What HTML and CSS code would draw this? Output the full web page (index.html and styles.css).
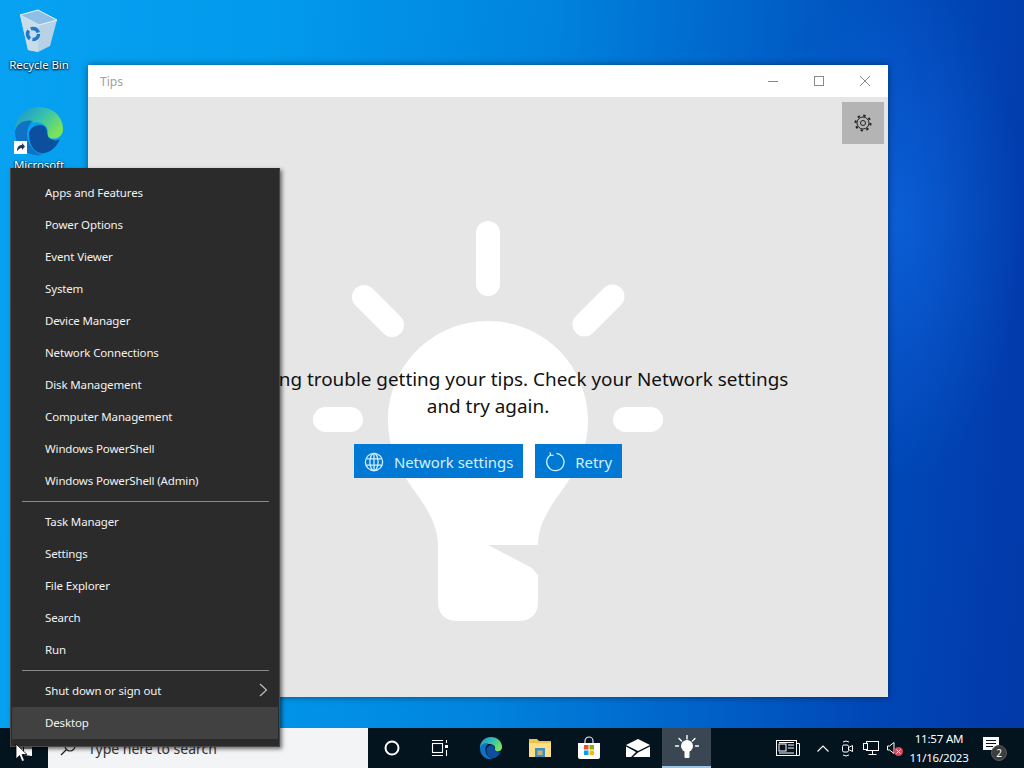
FILE: index.html
```html
<!DOCTYPE html>
<html lang="en">
<head>
    <meta charset="UTF-8">
    <title>Tips</title>
    <link rel="stylesheet" href="styles.css">
</head>
<body>
    <div class="screen">
        <div class="desktop">
            <div class="desk-icon recycle">
                <svg width="40" height="44" viewBox="0 0 40 44">
                    <path d="M1 6 L19 1 L38 11 L31 37 L19 43 L9 41 Z" fill="#b7d2e6"/>
                    <path d="M1 6 L19 1 L38 11 L20 16 Z" fill="#8fbfe6" stroke="#e6f2fa" stroke-width="1"/>
                    <path d="M1 6 L20 16 L19 43 L9 41 Z" fill="#c9dcea"/>
                    <circle cx="14" cy="25" r="5.5" fill="none" stroke="#1f78c8" stroke-width="3.5" stroke-dasharray="9 2.5"/>
                </svg>
                <span>Recycle Bin</span>
            </div>
            <div class="desk-icon edge-icon">
                <svg width="52" height="52" viewBox="0 0 52 52">
                    <defs>
                        <linearGradient id="edgeTop" x1="0" y1="0" x2="1" y2="0.6">
                            <stop offset="0" stop-color="#1b8fcf"/>
                            <stop offset="0.55" stop-color="#35c1b0"/>
                            <stop offset="1" stop-color="#7be25a"/>
                        </linearGradient>
                    </defs>
                    <path d="M2 26 C2 11 13 2 26 2 C40 2 50 12 50 24 C50 32 43 35 37 33 C33 31 36 27 34 23 C31 17 21 15 14 20 C8 24 4 30 2 26 Z" fill="url(#edgeTop)"/>
                    <path d="M2 26 C4 18 12 14 20 16 C12 22 12 36 20 44 C24 48 28 50 30 50 C14 52 2 42 2 26 Z" fill="#0f72c4"/>
                    <path d="M16 30 C16 22 25 18 31 21 C35 24 33 29 36 33 C40 36 45 36 47 34 C43 44 33 50 27 48 C20 46 16 38 16 30 Z" fill="#0b4f9e"/>
                    <rect x="1" y="36" width="13" height="13" fill="#fff"/>
                    <path d="M4 46 C4 42 6 40 9 40 L9 38 L12 41.5 L9 45 L9 43 C7 43 6 44 4 46 Z" fill="#1f3a57"/>
                </svg>
                <span>Microsoft</span>
            </div>

            <section class="window">
                <header class="titlebar">
                    <span class="title">Tips</span>
                    <div class="win-controls">
                        <button class="win-btn"><svg width="12" height="12" viewBox="0 0 12 12"><path d="M1 6.5 H11" stroke="#8a8a8a"/></svg></button>
                        <button class="win-btn"><svg width="12" height="12" viewBox="0 0 12 12"><rect x="1.5" y="1.5" width="9" height="9" fill="none" stroke="#8a8a8a"/></svg></button>
                        <button class="win-btn"><svg width="12" height="12" viewBox="0 0 12 12"><path d="M1 1 L11 11 M11 1 L1 11" stroke="#8a8a8a"/></svg></button>
                    </div>
                </header>
                <div class="tips-body">
                    <svg class="bulb" width="352" height="402" viewBox="0 0 352 402">
                        <g fill="#fff">
                            <rect x="164" y="1" width="24" height="75" rx="12"/>
                            <rect x="1" y="187" width="50" height="25" rx="12.5"/>
                            <rect x="301" y="187" width="50" height="25" rx="12.5"/>
                            <path d="M176 101 C232 101 276 146 276 201 C276 225 268 240 258 258 C248 276 226 296 226 326 L226 381 Q226 401 206 401 L146 401 Q126 401 126 381 L126 326 C126 296 104 276 94 258 C84 240 76 225 76 201 C76 146 120 101 176 101 Z"/>
                        </g>
                        <g stroke="#fff" stroke-width="24" stroke-linecap="round">
                            <path d="M52 77 L80 105"/>
                            <path d="M272.5 104.5 L300.5 76.5"/>
                        </g>
                        <path d="M176 325 L228 325 L228 358 L220 348 Z" fill="#e6e6e6"/>
                    </svg>
                    <button class="settings-btn">
                        <svg width="18" height="18" viewBox="0 0 18 18" fill="none" stroke="#222" stroke-width="1">
                            <circle cx="9" cy="9" r="2.5"/>
                            <circle cx="9" cy="9" r="6"/>
                            <circle cx="9" cy="9" r="7.5" stroke-width="2" stroke-dasharray="2.4 3.49"/>
                        </svg>
                    </button>
                    <div class="message">
                        <p>We're having trouble getting your tips. Check your Network settings<br>and try again.</p>
                        <div class="actions">
                            <button class="action-btn">
                                <svg width="20" height="20" viewBox="0 0 22 22" fill="none" stroke="#d3f1ff" stroke-width="1.4">
                                    <circle cx="11" cy="11" r="9.5"/>
                                    <ellipse cx="11" cy="11" rx="4.5" ry="9.5"/>
                                    <path d="M11 1.5 V20.5 M2.5 7.5 H19.5 M2.5 14.5 H19.5"/>
                                </svg>
                                Network settings
                            </button>
                            <button class="action-btn">
                                <svg width="20" height="20" viewBox="0 0 22 22" fill="none" stroke="#d3f1ff" stroke-width="1.4">
                                    <path d="M6 3.2 A9.5 9.5 0 1 0 12.5 1.6"/>
                                    <path d="M5.5 0.5 L6.2 3.5 L9.5 3.8"/>
                                </svg>
                                Retry
                            </button>
                        </div>
                    </div>
                </div>
            </section>

            <nav class="winx-menu">
                <div class="menu-group">
                    <div class="menu-item">Apps and Features</div>
                    <div class="menu-item">Power Options</div>
                    <div class="menu-item">Event Viewer</div>
                    <div class="menu-item">System</div>
                    <div class="menu-item">Device Manager</div>
                    <div class="menu-item">Network Connections</div>
                    <div class="menu-item">Disk Management</div>
                    <div class="menu-item">Computer Management</div>
                    <div class="menu-item">Windows PowerShell</div>
                    <div class="menu-item">Windows PowerShell (Admin)</div>
                </div>
                <div class="menu-sep"></div>
                <div class="menu-group">
                    <div class="menu-item">Task Manager</div>
                    <div class="menu-item">Settings</div>
                    <div class="menu-item">File Explorer</div>
                    <div class="menu-item">Search</div>
                    <div class="menu-item">Run</div>
                </div>
                <div class="menu-sep"></div>
                <div class="menu-group">
                    <div class="menu-item has-sub">Shut down or sign out
                        <svg width="10" height="14" viewBox="0 0 10 14"><path d="M2 1 L8.5 7 L2 13" fill="none" stroke="#bdbdbd" stroke-width="1.2"/></svg>
                    </div>
                    <div class="menu-item active">Desktop</div>
                </div>
            </nav>

            <svg class="cursor" width="14" height="20" viewBox="0 0 14 20">
                <path d="M1 1 V16 L4.5 12.5 L7 18.5 L9.5 17.5 L7 11.5 L12 11.5 Z" fill="#fff" stroke="#000" stroke-width="0.8"/>
            </svg>
        </div>

        <footer class="taskbar">
            <div class="start-btn">
                <svg width="16" height="16" viewBox="0 0 16 16" fill="#fff">
                    <path d="M0 2.2 L7 1.2 V7.5 H0 Z M8 1 L16 0 V7.5 H8 Z M0 8.5 H7 V14.8 L0 13.8 Z M8 8.5 H16 V16 L8 15 Z"/>
                </svg>
            </div>
            <div class="search-box">
                <svg width="18" height="18" viewBox="0 0 18 18" fill="none" stroke="#222" stroke-width="1.2"><circle cx="11" cy="7" r="5"/><path d="M7.5 10.5 L2 16"/></svg>
                <span>Type here to search</span>
            </div>
            <div class="task-btn task-wide">
                <svg width="16" height="16" viewBox="0 0 16 16"><circle cx="8" cy="8" r="6.5" fill="none" stroke="#fff" stroke-width="2"/></svg>
            </div>
            <div class="task-btn task-wide">
                <svg width="18" height="18" viewBox="0 0 18 18" fill="none" stroke="#fff" stroke-width="1.1">
                    <path d="M1 1.5 H12 M1 16.5 H12"/>
                    <rect x="1.5" y="4.5" width="10" height="9"/>
                    <rect x="14" y="6" width="3" height="3" fill="#fff" stroke="none"/>
                    <path d="M15.5 1 V4 M15.5 11 V17"/>
                </svg>
            </div>
            <div class="apps">
                <div class="task-btn">
                    <svg width="24" height="24" viewBox="0 0 52 52">
                        <path d="M2 26 C2 11 13 2 26 2 C40 2 50 12 50 24 C50 32 43 35 37 33 C33 31 36 27 34 23 C31 17 21 15 14 20 C8 24 4 30 2 26 Z" fill="url(#edgeTop)"/>
                        <path d="M2 26 C4 18 12 14 20 16 C12 22 12 36 20 44 C24 48 28 50 30 50 C14 52 2 42 2 26 Z" fill="#0f72c4"/>
                        <path d="M16 30 C16 22 25 18 31 21 C35 24 33 29 36 33 C40 36 45 36 47 34 C43 44 33 50 27 48 C20 46 16 38 16 30 Z" fill="#0b4f9e"/>
                    </svg>
                </div>
                <div class="task-btn">
                    <svg width="22" height="20" viewBox="0 0 22 20">
                        <path d="M0 1 H8 L10 3 H22 V19 H0 Z" fill="#f2c04c"/>
                        <path d="M0 5 H22 V19 H0 Z" fill="#ffdf85"/>
                        <path d="M6 10 H16 V19 H6 Z" fill="#3b8fc4"/>
                        <path d="M8.5 12.5 H13.5 V17 H8.5 Z" fill="#c9b273"/>
                    </svg>
                </div>
                <div class="task-btn">
                    <svg width="24" height="24" viewBox="0 0 24 24">
                        <path d="M8 7 V5 A4 4 0 0 1 16 5 V7" fill="none" stroke="#e8e8e8" stroke-width="1.2"/>
                        <path d="M1 7 H23 V21 Q23 23 21 23 H3 Q1 23 1 21 Z" fill="#fff"/>
                        <rect x="7" y="9" width="4.5" height="4.5" fill="#f25022"/>
                        <rect x="12.5" y="9" width="4.5" height="4.5" fill="#7fba00"/>
                        <rect x="7" y="14.5" width="4.5" height="4.5" fill="#00a4ef"/>
                        <rect x="12.5" y="14.5" width="4.5" height="4.5" fill="#ffb900"/>
                    </svg>
                </div>
                <div class="task-btn">
                    <svg width="24" height="18" viewBox="0 0 24 18">
                        <path d="M0 6 L12 0 L24 6 L12 12 Z" fill="#fff"/>
                        <path d="M0 7.5 L10 13 L5 18 H0 Z M24 7.5 V18 H7 L12 13.5 Z" fill="#fff"/>
                    </svg>
                </div>
                <div class="task-btn active">
                    <svg width="24" height="24" viewBox="0 0 24 24" fill="#fff">
                        <circle cx="12" cy="11" r="6"/>
                        <rect x="9.5" y="15" width="5" height="8" rx="1"/>
                        <path d="M12 0.5 V4 M4 3.5 L6.5 6 M20 3.5 L17.5 6 M0.5 11 H3.5 M20.5 11 H23.5" stroke="#fff" stroke-width="1.4" stroke-linecap="round"/>
                    </svg>
                </div>
            </div>
            <div class="tray">
                <svg class="tray-news" width="24" height="16" viewBox="0 0 24 16" fill="none" stroke="#fff" stroke-width="1">
                    <rect x="0.5" y="0.5" width="20" height="15"/>
                    <path d="M20.5 3.5 H23.5 V15.5 H20.5"/>
                    <rect x="3" y="4" width="7" height="7"/>
                    <path d="M3 2.5 H18 M12 5 H18 M12 8 H18 M3 13 H18"/>
                </svg>
                <svg class="tray-chevron" width="12" height="7" viewBox="0 0 12 7" fill="none" stroke="#fff" stroke-width="1.1"><path d="M0.5 6.5 L6 1 L11.5 6.5"/></svg>
                <svg class="tray-meet" width="11" height="17" viewBox="0 0 11 17" fill="none" stroke="#fff" stroke-width="1">
                    <rect x="0.5" y="5" width="6" height="7" rx="1.5"/>
                    <path d="M6.5 7.5 L10.5 5.5 V11.5 L6.5 9.5 M1 2 Q4 0 7 2 M1 15 Q4 17 7 15"/>
                </svg>
                <svg class="tray-network" width="16" height="14" viewBox="0 0 16 14" fill="none" stroke="#fff" stroke-width="1">
                    <rect x="3.5" y="0.5" width="12" height="9"/>
                    <path d="M9.5 9.5 V13.5 M5.5 13.5 H13.5"/>
                    <rect x="0.5" y="2.5" width="4" height="6" fill="#04141f"/>
                </svg>
                <div class="tray-volume">
                    <svg width="8" height="12" viewBox="0 0 8 12"><path d="M0.5 4 H2.5 L7 0.5 V11.5 L2.5 8 H0.5 Z" fill="none" stroke="#fff"/></svg>
                    <span class="mute-badge">
                        <svg width="5" height="5" viewBox="0 0 5 5"><path d="M0.5 0.5 L4.5 4.5 M4.5 0.5 L0.5 4.5" stroke="#fff"/></svg>
                    </span>
                </div>
                <div class="clock">
                    <span>11:57 AM</span>
                    <span>11/16/2023</span>
                </div>
                <div class="notify">
                    <svg width="16" height="13" viewBox="0 0 16 13"><path d="M0 0 H16 V13 H0 Z" fill="#fff"/><path d="M3 3.5 H13 M3 6.5 H13 M3 9.5 H10" stroke="#04141f"/></svg>
                    <span class="notify-count">2</span>
                </div>
            </div>
        </footer>
    </div>
</body>
</html>
```

FILE: styles.css
```css
* {
    box-sizing: border-box;
}

body {
    margin: 0;
    font-family: "Noto Sans", "Open Sans", sans-serif;
    overflow: hidden;
}

button {
    font-family: inherit;
    border: none;
    background: none;
    padding: 0;
}

.screen {
    width: 1024px;
    height: 768px;
    display: flex;
    flex-direction: column;
    overflow: hidden;
}

.desktop {
    position: relative;
    flex: 1;
    background:
        radial-gradient(ellipse 120px 260px at 900px 220px, rgba(20, 110, 235, 0.55), transparent),
        linear-gradient(95deg, #08a2f2 0%, #029aec 25%, #0084de 50%, #0062ca 70%, #0048b8 85%, #0338a8 100%);
}

.desk-icon {
    position: absolute;
    width: 76px;
    display: flex;
    flex-direction: column;
    align-items: center;
    color: #fff;
    font-size: 11.5px;
    letter-spacing: -0.1px;
    line-height: 16px;
    text-shadow: 0 1px 2px #000, 0 0 2px #000;
}

.recycle {
    left: 1px;
    top: 9px;
    gap: 4px;
}

.edge-icon {
    left: 1px;
    top: 105px;
}

/* tips window */
.window {
    position: absolute;
    left: 88px;
    top: 65px;
    width: 800px;
    height: 632px;
    background-color: #e6e6e6;
    box-shadow: 0 0 7px rgba(0, 0, 0, 0.45);
    display: flex;
    flex-direction: column;
}

.titlebar {
    height: 32px;
    background-color: #fff;
    display: flex;
    align-items: center;
    justify-content: space-between;
}

.title {
    padding-left: 12px;
    font-size: 12px;
    color: #a0a0a0;
}

.win-controls {
    display: flex;
    height: 32px;
}

.win-btn {
    width: 46px;
    display: flex;
    align-items: center;
    justify-content: center;
}

.tips-body {
    position: relative;
    flex: 1;
}

.bulb {
    position: absolute;
    left: 224px;
    top: 123px;
}

.settings-btn {
    position: absolute;
    right: 4px;
    top: 5px;
    width: 42px;
    height: 42px;
    background-color: #b4b4b4;
    display: flex;
    align-items: center;
    justify-content: center;
}

.message {
    position: relative;
    padding-top: 269px;
    text-align: center;
}

.message p {
    margin: 0;
    font-size: 18.9px;
    line-height: 27px;
    color: #111;
}

.actions {
    display: flex;
    justify-content: center;
    gap: 12px;
    margin-top: 24px;
}

.action-btn {
    height: 34px;
    padding: 1px 10px 0;
    display: flex;
    align-items: center;
    gap: 10px;
    background-color: #0078d4;
    color: #d3f1ff;
    font-size: 14.9px;
}

/* win+x menu */
.winx-menu {
    position: absolute;
    left: 10px;
    top: 168px;
    width: 270px;
    height: 579px;
    padding: 8px 1px;
    background-color: #2b2b2b;
    box-shadow: 2px 2px 4px rgba(0, 0, 0, 0.55);
    border: 1px solid #4a4a4a;
    border-top-color: #2b2b2b;
    color: #f2f2f2;
    z-index: 2;
}

.menu-item {
    height: 32px;
    padding: 0 10px 2px 33px;
    display: flex;
    align-items: center;
    justify-content: space-between;
    font-size: 11.5px;
    letter-spacing: -0.14px;
    white-space: nowrap;
}

.menu-item.active {
    background-color: #414141;
}

.menu-sep {
    height: 1px;
    margin: 4px 9px 4px 10px;
    background-color: #8a8a8a;
}

.cursor {
    position: absolute;
    left: 15px;
    top: 743px;
    z-index: 3;
}

/* taskbar */
.taskbar {
    height: 40px;
    background-color: #04141f;
    display: flex;
    align-items: stretch;
    color: #fff;
    z-index: 1;
}

.start-btn {
    width: 48px;
    display: flex;
    align-items: center;
    justify-content: center;
}

.search-box {
    width: 320px;
    background-color: #f2f4f5;
    display: flex;
    align-items: center;
    gap: 11px;
    padding-left: 11px;
    font-size: 14px;
    color: #333;
}

.apps {
    display: flex;
    margin-left: 2px;
}

.task-btn {
    width: 49px;
    display: flex;
    align-items: center;
    justify-content: center;
}

.task-wide {
    width: 48px;
}

.task-btn.active {
    background-color: #3a4651;
    border-bottom: 2px solid #9cc7e4;
}

.tray {
    flex: 1;
    display: flex;
    align-items: center;
    padding-left: 65px;
}

.tray svg,
.tray > div {
    flex-shrink: 0;
}

.tray-chevron {
    margin-left: 17px;
}

.tray-meet {
    margin-left: 13px;
}

.tray-network {
    margin-left: 10px;
}

.tray-volume {
    position: relative;
    width: 17px;
    height: 12px;
    margin-left: 8px;
    display: flex;
}

.mute-badge {
    position: absolute;
    left: 7px;
    top: 5px;
    width: 9px;
    height: 9px;
    border-radius: 50%;
    background-color: #d9485c;
    display: flex;
    align-items: center;
    justify-content: center;
}

.clock {
    width: 64px;
    margin-left: 3px;
    display: flex;
    flex-direction: column;
    align-items: center;
    font-size: 11.5px;
    line-height: 19px;
    letter-spacing: -0.2px;
}

.notify {
    position: relative;
    width: 24px;
    height: 24px;
    margin-left: 12px;
    padding-top: 1px;
}

.notify svg {
    display: block;
}

.notify-count {
    position: absolute;
    left: 8px;
    top: 9px;
    width: 16px;
    height: 16px;
    border-radius: 50%;
    background-color: #3d3d3d;
    border: 1px solid #5a5a5a;
    font-size: 10px;
    line-height: 14px;
    text-align: center;
}
```
